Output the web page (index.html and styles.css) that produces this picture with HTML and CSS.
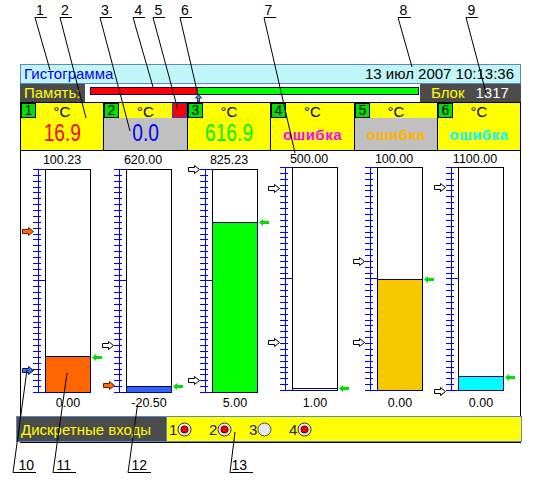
FILE: index.html
```html
<!DOCTYPE html>
<html lang="ru">
<head>
<meta charset="utf-8">
<title>Гистограмма</title>
<link rel="stylesheet" href="styles.css">
</head>
<body>
<svg class="defs" width="0" height="0" aria-hidden="true">
  <defs>
    <symbol id="scale" viewBox="0 0 12 224">
      <path d="M5.5 0V224M0 0.5H12M0 223.5H12M0 111.5H12M0 6.5H8M0 12.5H8M0 18.5H8M0 23.5H8M0 29.5H8M0 35.5H8M0 41.5H8M0 47.5H8M0 53.5H8M0 59.5H8M0 65.5H8M0 70.5H8M0 76.5H8M0 82.5H8M0 88.5H8M0 94.5H8M0 100.5H8M0 106.5H8M0 117.5H8M0 123.5H8M0 129.5H8M0 135.5H8M0 141.5H8M0 147.5H8M0 153.5H8M0 158.5H8M0 164.5H8M0 170.5H8M0 176.5H8M0 182.5H8M0 188.5H8M0 194.5H8M0 200.5H8M0 205.5H8M0 211.5H8M0 217.5H8" stroke="#0000ff" stroke-width="1" fill="none" shape-rendering="crispEdges"/>
    </symbol>
    <symbol id="ra" viewBox="0 0 12 9">
      <polygon points="0.5,2.5 6.5,2.5 6.5,0.5 11.5,4.5 6.5,8.5 6.5,6.5 0.5,6.5"/>
    </symbol>
    <symbol id="ga" viewBox="0 0 10 7">
      <polygon points="0,3.5 4,0 4,2 10,2 10,5 4,5 4,7"/>
    </symbol>
    <symbol id="rad-on" viewBox="0 0 15 15">
      <circle cx="7.5" cy="7.5" r="6.5" fill="#f2f2f2" stroke="#303030"/>
      <circle cx="7.5" cy="7.5" r="3.6" fill="#ff0000" stroke="#500000"/>
    </symbol>
    <symbol id="rad-off" viewBox="0 0 15 15">
      <circle cx="7.5" cy="7.5" r="6.5" fill="#e6e8f0" stroke="#505050"/>
    </symbol>
  </defs>
</svg>

<div class="page">
  <div class="device">
    <div class="title">
      <span class="title-name">Гистограмма</span>
      <span class="title-date">13 июл 2007 10:13:36</span>
    </div>

    <div class="mem">
      <div class="mem-label">Память:</div>
      <div class="mem-track">
        <div class="mem-bar"><div class="mem-red"></div><div class="mem-green"></div></div>
        <svg class="mem-mark" width="7" height="8" viewBox="0 0 7 8"><polygon points="3.5,0.5 6.5,4 4.5,4 4.5,7.5 2.5,7.5 2.5,4 0.5,4"/></svg>
      </div>
      <div class="mem-blok">Блок<span class="mem-num">1317</span></div>
    </div>

    <div class="channels">
      <div class="ch">
        <div class="ch-head"><span class="badge">1</span><span class="unit">°C</span></div>
        <div class="ch-val"><span class="num c-red">16.9</span></div>
      </div>
      <div class="ch">
        <div class="ch-head"><span class="badge">2</span><span class="unit">°C</span><span class="flag"></span></div>
        <div class="ch-val grey"><span class="num c-blue">0.0</span></div>
      </div>
      <div class="ch">
        <div class="ch-head"><span class="badge">3</span><span class="unit">°C</span></div>
        <div class="ch-val"><span class="num c-green">616.9</span></div>
      </div>
      <div class="ch">
        <div class="ch-head"><span class="badge">4</span><span class="unit">°C</span></div>
        <div class="ch-val"><span class="err c-magenta">ошибка</span></div>
      </div>
      <div class="ch">
        <div class="ch-head"><span class="badge">5</span><span class="unit">°C</span></div>
        <div class="ch-val grey"><span class="err c-orange">ошибка</span></div>
      </div>
      <div class="ch">
        <div class="ch-head"><span class="badge">6</span><span class="unit">°C</span></div>
        <div class="ch-val"><span class="err c-cyan">ошибка</span></div>
      </div>
    </div>

    <div class="panel">
      <div class="cols">
        <div class="col">
          <div class="top">100.23</div>
          <div class="graph">
            <svg class="scale" width="12" height="224"><use href="#scale"/></svg>
            <div class="bar"><div class="fill f1" style="height:37px"></div></div>
            <svg class="mk mk-l a-or" style="top:58px" width="12" height="9"><use href="#ra"/></svg>
            <svg class="mk mk-l a-bl" style="top:197px" width="12" height="9"><use href="#ra"/></svg>
            <svg class="mk mk-g" style="top:185px" width="10" height="7"><use href="#ga"/></svg>
          </div>
          <div class="bot">0.00</div>
        </div>
        <div class="col">
          <div class="top">620.00</div>
          <div class="graph">
            <svg class="scale" width="12" height="224"><use href="#scale"/></svg>
            <div class="bar"><div class="fill f2" style="height:7px"></div></div>
            <svg class="mk mk-w a-wh" style="top:172px" width="12" height="9"><use href="#ra"/></svg>
            <svg class="mk mk-l a-or" style="top:212px" width="12" height="9"><use href="#ra"/></svg>
            <svg class="mk mk-g" style="top:214px" width="10" height="7"><use href="#ga"/></svg>
          </div>
          <div class="bot">-20.50</div>
        </div>
        <div class="col">
          <div class="top">825.23</div>
          <div class="graph">
            <svg class="scale" width="12" height="224"><use href="#scale"/></svg>
            <div class="bar"><div class="fill f3" style="height:171px"></div></div>
            <svg class="mk mk-w a-wh" style="top:-4px" width="12" height="9"><use href="#ra"/></svg>
            <svg class="mk mk-w a-wh" style="top:207px" width="12" height="9"><use href="#ra"/></svg>
            <svg class="mk mk-g" style="top:50px" width="10" height="7"><use href="#ga"/></svg>
          </div>
          <div class="bot">5.00</div>
        </div>
        <div class="col raised">
          <div class="top">500.00</div>
          <div class="graph">
            <svg class="scale" width="12" height="224"><use href="#scale"/></svg>
            <div class="bar"><div class="fill f4" style="height:3px"></div></div>
            <svg class="mk mk-w a-wh" style="top:17px" width="12" height="9"><use href="#ra"/></svg>
            <svg class="mk mk-w a-wh" style="top:171px" width="12" height="9"><use href="#ra"/></svg>
            <svg class="mk mk-g" style="top:218px" width="10" height="7"><use href="#ga"/></svg>
          </div>
          <div class="bot">1.00</div>
        </div>
        <div class="col raised">
          <div class="top">100.00</div>
          <div class="graph">
            <svg class="scale" width="12" height="224"><use href="#scale"/></svg>
            <div class="bar"><div class="fill f5" style="height:112px"></div></div>
            <svg class="mk mk-w a-wh" style="top:90px" width="12" height="9"><use href="#ra"/></svg>
            <svg class="mk mk-w a-wh" style="top:171px" width="12" height="9"><use href="#ra"/></svg>
            <svg class="mk mk-g" style="top:109px" width="10" height="7"><use href="#ga"/></svg>
          </div>
          <div class="bot">0.00</div>
        </div>
        <div class="col raised">
          <div class="top">1100.00</div>
          <div class="graph">
            <svg class="scale" width="12" height="224"><use href="#scale"/></svg>
            <div class="bar"><div class="fill f6" style="height:15px"></div></div>
            <svg class="mk mk-w a-wh" style="top:16px" width="12" height="9"><use href="#ra"/></svg>
            <svg class="mk mk-w a-wh" style="top:220px" width="12" height="9"><use href="#ra"/></svg>
            <svg class="mk mk-g" style="top:207px" width="10" height="7"><use href="#ga"/></svg>
          </div>
          <div class="bot">0.00</div>
        </div>
      </div>

      <div class="dbar">
        <div class="dlabel">Дискретные входы</div>
        <div class="dinputs">
          <span class="din">1<svg width="15" height="15"><use href="#rad-on"/></svg></span>
          <span class="din">2<svg width="15" height="15"><use href="#rad-on"/></svg></span>
          <span class="din">3<svg width="15" height="15"><use href="#rad-off"/></svg></span>
          <span class="din">4<svg width="15" height="15"><use href="#rad-on"/></svg></span>
        </div>
      </div>
    </div>
  </div>

  <svg class="callouts" width="540" height="482" viewBox="0 0 540 482">
    <g class="co-lines">
      <path d="M35 17.5H47M35 17.5L50 70"/>
      <path d="M60 17.5H72M60 17.5L86 118"/>
      <path d="M100 17.5H112M100 17.5L130 131"/>
      <path d="M133 17.5H145M133 17.5L153 87"/>
      <path d="M153 17.5H165M153 17.5L178 110"/>
      <path d="M180 17.5H192M180 17.5L198 95"/>
      <path d="M264 17.5H276M264 17.5L295 153"/>
      <path d="M398 17.5H411M398 17.5L412 67"/>
      <path d="M466 17.5H478M466 17.5L486 93"/>
      <path d="M13 472.5H36M13 472.5L27 370"/>
      <path d="M53 472.5H76M53 472.5L67 373"/>
      <path d="M128 472.5H151M128 472.5L137.5 405"/>
      <path d="M230 472.5H253M230 472.5L235 432"/>
    </g>
    <g class="co-text">
      <text x="36" y="15">1</text>
      <text x="61" y="15">2</text>
      <text x="101" y="15">3</text>
      <text x="134.5" y="15">4</text>
      <text x="154.5" y="15">5</text>
      <text x="181" y="15">6</text>
      <text x="264.5" y="15">7</text>
      <text x="399.5" y="15">8</text>
      <text x="467.5" y="15">9</text>
      <text x="18.5" y="470">10</text>
      <text x="56.5" y="470">11</text>
      <text x="131.5" y="470">12</text>
      <text x="231.5" y="470">13</text>
    </g>
  </svg>
</div>
</body>
</html>
```

FILE: styles.css
```css
* { box-sizing: border-box; }
html, body { margin: 0; padding: 0; background: #fff; }
body { font-family: "Liberation Sans", Arial, sans-serif; color: #000; }

.defs { position: absolute; width: 0; height: 0; overflow: hidden; }

.page { position: relative; width: 540px; height: 482px; overflow: hidden; padding: 64px 0 0 20px; }
.device { width: 501px; }

/* title bar */
.title {
  height: 20px;
  border: 1px solid #5a88c8;
  background: #c0f6f8;
  display: flex;
  justify-content: space-between;
  padding: 0 6px 0 3px;
  font-size: 15px;
  line-height: 18px;
}
.title-name { color: #0000ff; }
.title-date { color: #000; }

/* memory row */
.mem { display: flex; height: 18px; font-size: 15px; line-height: 18px; }
.mem-label { width: 65px; background: #4b4b4b; color: #ffff00; padding-left: 4px; }
.mem-track { flex: 1; position: relative; background: #fff; padding: 3px 1px 0 5px; }
.mem-bar { display: flex; height: 8px; border: 1px solid #000080; }
.mem-red { width: 107px; background: #ff0000; }
.mem-green { flex: 1; background: #00ff00; }
.mem-mark { position: absolute; left: 110px; top: 10px; fill: #7090c0; stroke: #203060; stroke-width: 1; }
.mem-blok { width: 101px; background: #4b4b4b; color: #ffff00; padding-left: 11px; }
.mem-num { color: #fff; margin-left: 11px; }

/* channel boxes */
.channels {
  display: grid;
  grid-template-columns: 83px 84px 83px 84px 83px 84px;
  height: 49px;
  border-top: 1px solid #000;
  border-bottom: 1px solid #000;
}
.ch { border-left: 1px solid #000; background: #ffff00; display: flex; flex-direction: column; }
.ch:last-child { border-right: 1px solid #000; }
.ch-head { display: grid; grid-template-columns: 15px 1fr 15px; height: 15px; }
.badge {
  width: 15px; height: 15px;
  background: #00e000;
  border: 1px solid #000;
  font-size: 14px;
  line-height: 13px;
  text-align: center;
}
.unit { text-align: center; font-size: 15px; line-height: 17px; }
.flag { width: 15px; height: 15px; background: #ff0000; border: 1px solid #2040d0; }
.ch-val { height: 32px; text-align: center; overflow: visible; }
.ch-val.grey { background: #c0c0c0; }
.num { display: inline-block; font-size: 24px; line-height: 29px; transform: scaleX(0.8); }
.err { font-size: 15px; font-weight: bold; line-height: 34px; letter-spacing: 0.5px; }
.c-red { color: #ff0000; }
.c-blue { color: #0000ff; }
.c-green { color: #00f000; }
.c-magenta { color: #ff00ff; }
.c-orange { color: #ffb400; }
.c-cyan { color: #00ffff; }

/* histogram panel */
.panel { border: 1px solid #000; border-top: 0; height: 292px; display: flex; flex-direction: column; }
.cols {
  display: grid;
  grid-template-columns: 81px 86px 80px 85px 81px 58px;
  padding-left: 12px;
  height: 265px;
}
.col { width: 58px; display: flex; flex-direction: column; font-size: 12.5px; }
.top { height: 18px; line-height: 18px; text-align: center; white-space: nowrap; }
.raised .top { height: 16px; line-height: 16px; }
.graph { position: relative; display: flex; height: 224px; }
.scale { display: block; flex: none; }
.bar { position: relative; width: 46px; height: 224px; border: 1px solid #000; background: #fff; }
.fill { position: absolute; left: -1px; right: -1px; bottom: -1px; border: 1px solid #000080; }
.f1 { background: #ff6600; }
.f2 { background: #3366ee; }
.f3 { background: #00ff00; }
.f4 { background: #fff; }
.f5 { background: #f5c800; }
.f6 { background: #00ffff; }
.bot { margin-top: 1px; padding-left: 12px; line-height: 18px; text-align: center; white-space: nowrap; }
.raised .bot { margin-top: 3px; }

.mk { position: absolute; display: block; overflow: visible; }
.mk-l { left: -11px; }
.mk-w { left: -12px; }
.mk-g { left: 59px; fill: #00e000; }
.a-or { fill: #ff6a10; stroke: #5a2000; stroke-width: 1; }
.a-bl { fill: #3c6ee6; stroke: #001060; stroke-width: 1; }
.a-wh { fill: #fff; stroke: #000; stroke-width: 1; }

/* discrete inputs bar */
.dbar {
  display: flex;
  height: 26px;
  margin: 0 -2px 0 -5px;
  border: 1px solid #5a88c8;
  font-size: 15px;
  line-height: 25px;
}
.dlabel { width: 150px; background: #4b4b4b; color: #ffff00; padding-left: 4px; border-right: 1px solid #5a88c8; white-space: nowrap; }
.dinputs { flex: 1; background: #ffff00; display: flex; padding-left: 2px; }
.din { width: 40px; display: flex; align-items: center; color: #202060; }
.din svg { display: block; }

/* callouts */
.callouts { position: absolute; left: 0; top: 0; pointer-events: none; }
.co-lines path { stroke: #000; stroke-width: 1; fill: none; }
.co-text text { font-family: "Liberation Sans", Arial, sans-serif; font-size: 14px; fill: #000; }
```
